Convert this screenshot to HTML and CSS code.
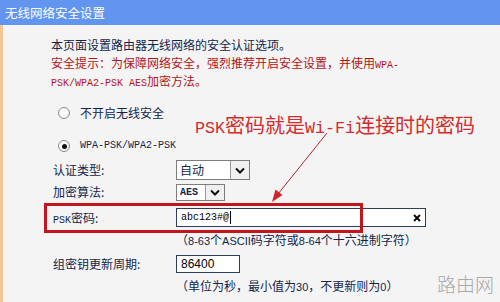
FILE: index.html
```html
<!DOCTYPE html>
<html lang="zh-CN">
<head>
    <meta charset="UTF-8">
    <meta name="viewport" content="width=device-width, initial-scale=1.0">
    <title>无线网络安全设置</title>
    <link rel="stylesheet" href="styles.css">
</head>
<body>
    <div class="header">无线网络安全设置</div>

    <div class="panel">
        <p class="intro">本页面设置路由器无线网络的安全认证选项。</p>
        <p class="warn">安全提示：为保障网络安全，强烈推荐开启安全设置，并使用<span class="en">WPA-</span><br><span class="en">PSK/WPA2-PSK AES</span>加密方法。</p>

        <div class="radio-row first">
            <span class="radio"></span>
            <span>不开启无线安全</span>
        </div>
        <div class="radio-row">
            <span class="radio on"></span>
            <span class="en">WPA-PSK/WPA2-PSK</span>
        </div>

        <div class="field auth">
            <span class="label">认证类型:</span>
            <div class="select wide">
                <span class="value">自动</span>
                <span class="drop"><svg width="10" height="7" viewBox="0 0 10 7"><polyline points="1,1.5 5,5.5 9,1.5" fill="none" stroke="#111" stroke-width="2"/></svg></span>
            </div>
        </div>
        <div class="field algo">
            <span class="label">加密算法:</span>
            <div class="select narrow">
                <span class="value en">AES</span>
                <span class="drop"><svg width="10" height="7" viewBox="0 0 10 7"><polyline points="1,1.5 5,5.5 9,1.5" fill="none" stroke="#111" stroke-width="2"/></svg></span>
            </div>
        </div>

        <div class="field psk">
            <span class="label"><span class="en">PSK</span>密码:</span>
            <div class="input long">
                <span class="en">abc123#@</span><span class="caret"></span>
                <svg class="clear" width="8" height="8" viewBox="0 0 8 8"><path d="M1 1L7 7M7 1L1 7" stroke="#000" stroke-width="1.8"/></svg>
            </div>
        </div>
        <div class="hint">（<span class="num">8-63</span>个<span class="num">ASCII</span>码字符或<span class="num">8-64</span>个十六进制字符）</div>

        <div class="field period">
            <span class="label">组密钥更新周期:</span>
            <div class="input short"><span class="num">86400</span></div>
        </div>
        <div class="hint">（单位为秒，最小值为<span class="num">30</span>，不更新则为<span class="num">0</span>）</div>
    </div>

    <!-- annotation drawn on top of the form -->
    <div class="mark-box"></div>
    <div class="note"><span class="en">PSK</span>密码就是<span class="en">Wi-Fi</span>连接时的密码</div>
    <svg class="arrow" width="500" height="302" viewBox="0 0 500 302">
        <line x1="327" y1="133" x2="278" y2="194" stroke="#b8232a" stroke-width="1"/>
        <polygon points="272,202 275.5,189.5 282.5,195" fill="#d0252b"/>
    </svg>
    <div class="watermark">路由网</div>
</body>
</html>
```

FILE: styles.css
```css
body {
    margin: 0;
    padding: 0;
    width: 500px;
    height: 302px;
    overflow: hidden;
    position: relative;
    background-color: #f4f4f4;
    font-family: "Noto Sans CJK SC", "Liberation Sans", sans-serif;
    font-size: 12px;
    color: #13264a;
}
.en {
    font-family: "Liberation Mono", "Noto Sans CJK SC", monospace;
    font-size: 10px;
    line-height: 10px;
}
.num {
    font-family: "Liberation Sans", sans-serif;
    font-size: 11px;
    line-height: 10px;
}
.header {
    height: 25px;
    line-height: 25px;
    padding-left: 5px;
    background-color: #6295ef;
    color: #fff;
    font-size: 12.5px;
}
.panel {
    height: 277px;
    box-sizing: border-box;
    border-left: 3px solid #f2c797;
    padding: 11px 0 0 48px;
}
.panel p {
    margin: 0;
    line-height: 18px;
}
.warn {
    color: #b3141b;
}
.radio-row {
    display: flex;
    align-items: center;
    height: 18px;
    line-height: 18px;
    margin-top: 15px;
    padding-left: 7px;
}
.radio-row.first {
    margin-top: 14px;
}
.radio {
    width: 10px;
    height: 10px;
    border: 1px solid #8a8a8a;
    border-radius: 50%;
    background: radial-gradient(circle at 40% 40%, #fff 40%, #e2e2e2 100%);
    margin-right: 10px;
    position: relative;
}
.radio.on::after {
    content: "";
    position: absolute;
    left: 2.5px;
    top: 2.5px;
    width: 5px;
    height: 5px;
    border-radius: 50%;
    background-color: #111;
}
.field {
    display: flex;
    align-items: center;
    padding-left: 2px;
}
.label {
    width: 123px;
    line-height: 18px;
}
.auth {
    margin-top: 5px;
    height: 20px;
}
.algo {
    margin-top: 3px;
    height: 18px;
}
.psk {
    margin-top: 7px;
    height: 19px;
}
.period {
    margin-top: 7px;
    height: 18px;
}
.select {
    display: flex;
    box-sizing: border-box;
    border: 1px solid #7d7d7d;
    background-color: #fff;
}
.select.wide {
    width: 74px;
    height: 20px;
}
.select.narrow {
    width: 49px;
    height: 17px;
}
.select .value {
    flex: 1;
    padding-left: 3px;
    line-height: 18px;
}
.select.narrow .value {
    line-height: 15px;
    font-weight: bold;
}
.drop {
    width: 18px;
    display: flex;
    align-items: center;
    justify-content: center;
    border-left: 1px solid #9a9a9a;
    background-color: #f0f0f0;
}
.input {
    display: flex;
    align-items: center;
    box-sizing: border-box;
    border: 1px solid #2d3f58;
    background-color: #fff;
    padding-left: 4px;
    color: #000;
}
.input.long {
    width: 250px;
    height: 19px;
}
.input.short {
    width: 64px;
    height: 18px;
}
.input .num {
    font-size: 12px;
}
.caret {
    width: 1px;
    height: 13px;
    margin-left: 1px;
    background-color: #000;
}
.clear {
    margin-left: auto;
    margin-right: 4px;
}
.hint {
    line-height: 16px;
    margin-top: 5px;
    padding-left: 125px;
}
.mark-box {
    position: absolute;
    left: 44px;
    top: 203px;
    width: 319px;
    height: 30px;
    box-sizing: border-box;
    border: 3px solid #c1161e;
}
.note {
    position: absolute;
    left: 195px;
    top: 113px;
    line-height: 24px;
    font-size: 20px;
    color: #d42b2e;
    font-family: "Noto Sans CJK SC", serif;
}
.note .en {
    font-size: 16.7px;
    line-height: 20px;
}
.arrow {
    position: absolute;
    left: 0;
    top: 0;
    pointer-events: none;
}
.watermark {
    position: absolute;
    left: 437px;
    top: 270px;
    font-size: 19px;
    line-height: 28px;
    color: #a9a9a9;
    font-weight: 300;
}
```
